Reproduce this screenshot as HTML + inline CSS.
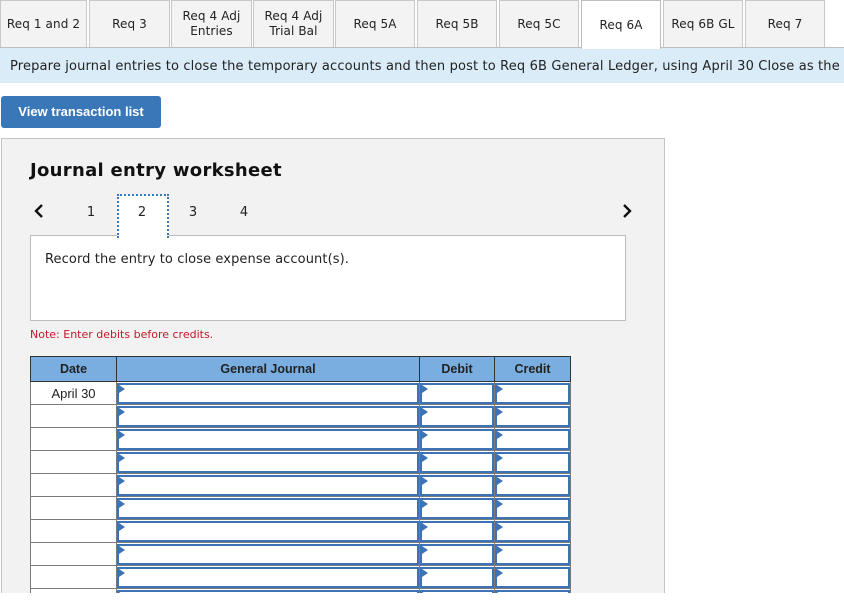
<!DOCTYPE html>
<html><head><meta charset="utf-8"><style>
*{box-sizing:border-box;margin:0;padding:0}
body{width:844px;height:603px;background:#fff;font-family:"DejaVu Sans",Verdana,sans-serif;color:#222;position:relative;overflow:hidden}
#clip{position:absolute;left:0;top:0;width:844px;height:593px;overflow:hidden}
.tab{position:absolute;top:0;height:47px;background:#f3f3f3;border:1px solid #c8c8c8;border-bottom:none;font-size:12px;display:flex;align-items:center;justify-content:center;text-align:center;line-height:15px;color:#222;letter-spacing:0.1px}
.tab.act{background:#fff;height:49px;z-index:2;border-color:#bdbdbd}
.line{position:absolute;left:0;top:47px;width:844px;height:1px;background:#bdbdbd}
.banner{position:absolute;left:0;top:48px;width:844px;height:35px;background:#d9ecf8;font-size:13px;line-height:38px;padding-left:10px;white-space:nowrap;color:#222;letter-spacing:0.15px}
.btn{position:absolute;left:1px;top:96px;width:160px;height:32px;background:#3a77b8;border-radius:3px;color:#fff;font-family:"Liberation Sans",Arial,sans-serif;font-weight:bold;font-size:13px;line-height:32px;text-align:center}
.panel{position:absolute;left:1px;top:138px;width:664px;height:480px;background:#f2f2f2;border:1px solid #c4c4c4}
h1{position:absolute;left:30px;top:160px;font-size:18px;font-weight:900;color:#111;letter-spacing:0.3px}
.num{position:absolute;top:205px;font-size:13px;width:20px;text-align:center}
.sel{position:absolute;left:117px;top:194px;width:52px;height:44px;background:#fff;border:2px dotted #3a77b8;border-bottom:none;z-index:2}
.prompt{position:absolute;left:30px;top:235px;width:596px;height:86px;background:#fff;border:1px solid #bdbdbd;font-size:13px;padding:16px 0 0 14px;letter-spacing:0.1px}
.note{position:absolute;left:30px;top:328px;font-size:11px;color:#c0182a}
table{position:absolute;left:30px;top:356px;border-collapse:collapse;font-family:"Liberation Sans",Arial,sans-serif}
th{background:#7aaee0;height:25px;border:1px solid #333;font-size:12.5px;font-weight:bold;color:#222}
td{height:23px;border:1px solid #7a7a7a;background:#fff;font-size:13px;text-align:center;padding:0;position:relative}
td.in div{position:absolute;left:0;top:1px;right:0;bottom:0;border:2px solid #3d72b4}
td.in div:before{content:"";position:absolute;left:0;top:0;border-left:6px solid #3d72b4;border-top:4px solid transparent;border-bottom:4px solid transparent}
</style></head><body><div id="clip">
<div class="tab" style="left:0;width:87px">Req 1 and 2</div>
<div class="tab" style="left:89px;width:81px">Req 3</div>
<div class="tab" style="left:171px;width:81px">Req 4 Adj<br>Entries</div>
<div class="tab" style="left:253px;width:81px">Req 4 Adj<br>Trial Bal</div>
<div class="tab" style="left:335px;width:80px">Req 5A</div>
<div class="tab" style="left:417px;width:80px">Req 5B</div>
<div class="tab" style="left:499px;width:80px">Req 5C</div>
<div class="tab act" style="left:581px;width:80px">Req 6A</div>
<div class="tab" style="left:663px;width:80px">Req 6B GL</div>
<div class="tab" style="left:745px;width:80px">Req 7</div>
<div class="line"></div>
<div class="banner">Prepare journal entries to close the temporary accounts and then post to Req 6B General Ledger, using April 30 Close as the date.</div>
<div class="btn">View transaction list</div>
<div class="panel"></div>
<h1>Journal entry worksheet</h1>
<svg style="position:absolute;left:33px;top:203px" width="12" height="16"><path d="M9 2 L3 8 L9 14" stroke="#111" stroke-width="2.4" fill="none"/></svg>
<svg style="position:absolute;left:621px;top:203px" width="12" height="16"><path d="M3 2 L9 8 L3 14" stroke="#111" stroke-width="2.4" fill="none"/></svg>
<div class="num" style="left:81px">1</div>
<div class="sel"></div>
<div class="num" style="left:132px;z-index:3">2</div>
<div class="num" style="left:183px">3</div>
<div class="num" style="left:234px">4</div>
<div class="prompt">Record the entry to close expense account(s).</div>
<div class="note">Note: Enter debits before credits.</div>
<table>
<tr><th style="width:86px">Date</th><th style="width:303px">General Journal</th><th style="width:75px">Debit</th><th style="width:76px">Credit</th></tr>
<tr><td>April 30</td><td class="in"><div></div></td><td class="in"><div></div></td><td class="in"><div></div></td></tr>
<tr><td></td><td class="in"><div></div></td><td class="in"><div></div></td><td class="in"><div></div></td></tr>
<tr><td></td><td class="in"><div></div></td><td class="in"><div></div></td><td class="in"><div></div></td></tr>
<tr><td></td><td class="in"><div></div></td><td class="in"><div></div></td><td class="in"><div></div></td></tr>
<tr><td></td><td class="in"><div></div></td><td class="in"><div></div></td><td class="in"><div></div></td></tr>
<tr><td></td><td class="in"><div></div></td><td class="in"><div></div></td><td class="in"><div></div></td></tr>
<tr><td></td><td class="in"><div></div></td><td class="in"><div></div></td><td class="in"><div></div></td></tr>
<tr><td></td><td class="in"><div></div></td><td class="in"><div></div></td><td class="in"><div></div></td></tr>
<tr><td></td><td class="in"><div></div></td><td class="in"><div></div></td><td class="in"><div></div></td></tr>
<tr><td></td><td class="in"><div></div></td><td class="in"><div></div></td><td class="in"><div></div></td></tr>
</table>
</div></body></html>
